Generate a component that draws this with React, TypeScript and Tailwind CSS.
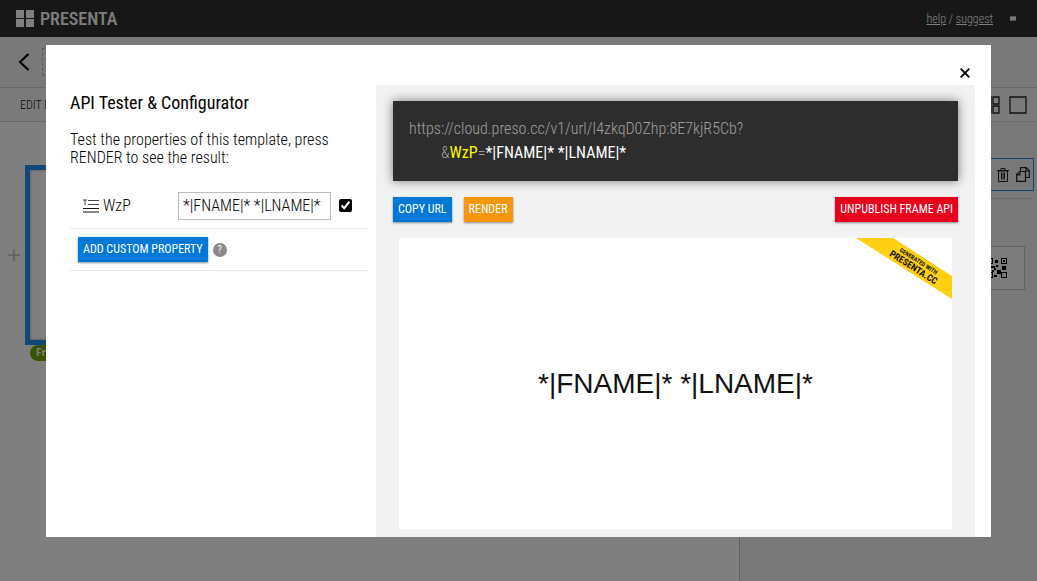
import { useState } from "react";
import type { ReactNode } from "react";

const tones = {
  blue: "bg-[#0078d7]",
  orange: "bg-[#f5960c]",
  red: "bg-[#e8001c]",
};

function Button({ tone, children }: { tone: keyof typeof tones; children: ReactNode }) {
  return (
    <button
      type="button"
      className={`h-[25px] shrink-0 whitespace-nowrap px-[5px] text-[12px] leading-[25px] text-white shadow-[0_1px_2px_rgba(0,0,0,0.45)] ${tones[tone]}`}
    >
      {children}
    </button>
  );
}

function TopBar() {
  return (
    <header className="flex h-[37px] shrink-0 items-center bg-[#2f2f2f] px-4 text-white">
      <a href="#home" className="flex items-center gap-[6px]">
        <svg width="18" height="17" viewBox="0 0 18 17" fill="currentColor" aria-hidden="true">
          <path d="M0 0h8v8H0zM10 0h8v8h-8zM0 9h8v8H0zM10 9h8v8h-8z" />
        </svg>
        <span className="text-[18px] leading-none font-medium">PRESENTA</span>
      </a>
      <nav className="ml-auto mr-[17px] text-[12px] leading-4 font-light">
        <a href="#help" className="underline">help</a> / <a href="#suggest" className="underline">suggest</a>
      </nav>
      <button type="button" aria-label="Menu" className="mr-[5px] h-[5px] w-[6px] border-y border-[#aaa] bg-[#eee]" />
    </header>
  );
}

function TrashIcon() {
  return (
    <svg width="12" height="14" viewBox="0 0 12 14" fill="none" stroke="#222" aria-hidden="true">
      <path d="M0 2.5h12M4 2V.5h4V2M1.5 3v10.5h9V3M4.5 4.5v7M6 4.5v7M7.5 4.5v7" />
      <path d="M1 3h10" />
    </svg>
  );
}

function CopyIcon() {
  return (
    <svg width="14" height="15" viewBox="0 0 14 15" fill="none" stroke="#222" strokeWidth="1.2" aria-hidden="true">
      <path d="M4.5 4V.7h5.800l3 3V10.500H9.500M10 .7V4h3.300" />
      <path d="M.7 14.300V7.500l3-3h5.800v9.800zM4 4.500v3.300H.7" />
    </svg>
  );
}

function QrIcon() {
  return (
    <svg width="21" height="21" viewBox="0 0 21 21" fill="#000" aria-hidden="true">
      <path fillRule="evenodd" d="M0 0h6v6H0zM1 1v4h4V1zM14 0h6v6h-6zM15 1v4h4V1zM0 14h6v6H0zM1 15v4h4v-4zM14 14h6v6h-6zM15 15v4h4v-4z" />
      <path d="M2 2h2v2H2zM16 2h2v2h-2zM2 16h2v2H2zM8 2h3v3H8zM4 8h4v2H4zM7 10h2v2H7zM9 7h2v2H9zM15 8h4v4h-4zM10 12h4v4h-4zM5 12h2v2H5zM7 17h3v2H7z" />
    </svg>
  );
}

function Workspace() {
  return (
    <div className="flex min-h-screen flex-col bg-white">
      <TopBar />
      <div className="flex h-[51px] shrink-0 items-center border-b border-[#d4d4d4] bg-[#f2f2f2] pl-[18px]">
        <button type="button" aria-label="Back">
          <svg width="12" height="18" viewBox="0 0 12 18" fill="none" stroke="#000" strokeWidth="2.200" aria-hidden="true">
            <path d="M10.500 1L2 9l8.500 8" />
          </svg>
        </button>
        <div className="ml-3 h-7 w-60 border border-dashed border-[#bbb]" />
      </div>
      <div className="flex h-[34px] shrink-0 items-center justify-between border-b border-[#d4d4d4] bg-[#f4f4f4] pl-5 pr-[10px]">
        <span className="text-[12px] font-light text-[#222]">EDIT F</span>
        <svg width="42" height="18" viewBox="0 0 42 18" fill="none" stroke="#222" strokeWidth="1.300" aria-hidden="true">
          <path d="M0 1h6v7H0zM8 1h6v7H8zM0 10h6v7H0zM8 10h6v7H8zM25 1h16v16H25z" />
        </svg>
      </div>
      <div className="flex flex-1">
        <main className="flex flex-1 items-start pl-2 pt-[43px]">
          <svg className="mt-[84px] mr-[5px] shrink-0" width="12" height="12" viewBox="0 0 12 12" stroke="#c0c0c0" strokeWidth="1.500" aria-hidden="true">
            <path d="M6 0v12M0 6h12" />
          </svg>
          <div>
            <div className="h-[180px] w-80 border-5 border-[#2490ea] shadow-[inset_0_0_3px_rgba(0,0,0,0.4)]" />
            <span className="ml-[5px] inline-block h-4 w-14 rounded-full bg-[#6fa800] px-[6px] align-top font-['Open_Sans',sans-serif] text-[10px] leading-[14px] font-bold text-white">
              Fr
            </span>
          </div>
        </main>
        <aside className="w-[298px] border-l border-[#c4c4c4] bg-[#f0f0f0] pt-9">
          <div className="mr-[3px] flex h-[33px] items-center justify-end gap-[7px] border border-[#1e88e5] pr-[3px]">
            <TrashIcon />
            <CopyIcon />
          </div>
          <div className="mr-1 mt-[7px] border-t border-[#d0d0d0]" />
          <div className="ml-auto mr-3 mt-[47px] flex h-[44px] w-20 items-center justify-end border border-[#c4c4c4] bg-[#f8f8f8] pr-4">
            <QrIcon />
          </div>
        </aside>
      </div>
    </div>
  );
}

function PropertyPanel() {
  const [value, setValue] = useState("*|FNAME|* *|LNAME|*");
  const [enabled, setEnabled] = useState(true);
  return (
    <section className="w-[330px] shrink-0 pl-6 pr-2 pt-[6px]">
      <h1 id="dialog-title" className="text-[18px] leading-6">API Tester &amp; Configurator</h1>
      <p className="mt-4 text-[16px] leading-[18px] font-light">
        Test the properties of this template, press RENDER to see the result:
      </p>
      <div className="mt-4 flex h-[46px] items-center border-b border-[#e8e8e8] pl-3 font-light">
        <svg width="17" height="14" viewBox="0 0 17 14" aria-hidden="true">
          <path d="M1 1h4M3 1v5" stroke="#444" />
          <path d="M6 1.500h11M6 5.500h11" stroke="#444" />
          <path d="M1 9.500h16M1 13h16" stroke="#111" />
        </svg>
        <label htmlFor="wzp" className="ml-1 w-[75px] text-[16px]">WzP</label>
        <input
          id="wzp"
          value={value}
          onChange={(e) => setValue(e.target.value)}
          className="h-7 w-[153px] border border-[#bbb] px-1 text-[16px] outline-none"
        />
        <input
          type="checkbox"
          aria-label="Include WzP"
          checked={enabled}
          onChange={(e) => setEnabled(e.target.checked)}
          className="ml-2 size-[13px] accent-black"
        />
      </div>
      <div className="flex h-[42px] items-center gap-[5px] border-b border-[#e8e8e8] pl-2">
        <Button tone="blue">ADD CUSTOM PROPERTY</Button>
        <button type="button" aria-label="Help" className="size-[14px] rounded-full bg-[#8a8a8a] text-[10px] leading-[14px] text-white">
          ?
        </button>
      </div>
    </section>
  );
}

function Ribbon() {
  return (
    <svg className="absolute right-0 top-0" width="96" height="61" viewBox="0 0 96 61" aria-label="Generated with presenta.cc">
      <path d="M0 0h37l59 38v23z" fill="#ffcf14" />
      <g transform="translate(59 27) rotate(32.500)" textAnchor="middle" fill="#1a1600" fontWeight="700">
        <text x="1" y="-3" fontSize="6">GENERATED WITH</text>
        <text x="0" y="6" fontSize="9.500">PRESENTA.CC</text>
      </g>
    </svg>
  );
}

function ResultPanel() {
  return (
    <section className="mr-4 flex flex-1 flex-col bg-[#f2f2f2] px-[17px] pb-2 pt-4">
      <div className="h-20 bg-[#2d2d2d] p-4 text-[16px] leading-6 font-light text-[#a0a0a0] shadow-[0_0_10px_rgba(0,0,0,0.5)]">
        <p>https://cloud.preso.cc/v1/url/I4zkqD0Zhp:8E7kjR5Cb?</p>
        <p className="pl-8">
          &amp;<span className="font-normal text-[#ff0]">WzP</span>=<span className="font-normal text-white">*|FNAME|* *|LNAME|*</span>
        </p>
      </div>
      <div className="mt-4 flex gap-3">
        <Button tone="blue">COPY URL</Button>
        <Button tone="orange">RENDER</Button>
        <div className="ml-auto flex">
          <Button tone="red">UNPUBLISH FRAME API</Button>
        </div>
      </div>
      <div className="relative mx-[6px] mt-4 flex flex-1 items-center justify-center overflow-hidden bg-white">
        <span className="font-['Liberation_Sans',Arial,sans-serif] text-[28px] text-[#111]">*|FNAME|* *|LNAME|*</span>
        <Ribbon />
      </div>
    </section>
  );
}

export default function App() {
  return (
    <div className="relative h-screen overflow-hidden font-['Roboto_Condensed','Liberation_Sans_Narrow',Roboto,sans-serif] text-black">
      <Workspace />
      <div className="absolute inset-0 flex bg-black/50 px-[46px] pb-[44px] pt-[45px]">
        <div role="dialog" aria-modal="true" aria-labelledby="dialog-title" className="flex flex-1 flex-col bg-white">
          <div className="flex h-10 shrink-0 items-end justify-end pb-[7px] pr-[21px]">
            <button type="button" aria-label="Close">
              <svg width="10" height="10" viewBox="0 0 10 10" fill="none" stroke="#000" strokeWidth="1.800" aria-hidden="true">
                <path d="M.7.7l8.600 8.600M9.300.7L.7 9.300" />
              </svg>
            </button>
          </div>
          <div className="flex flex-1">
            <PropertyPanel />
            <ResultPanel />
          </div>
        </div>
      </div>
    </div>
  );
}
